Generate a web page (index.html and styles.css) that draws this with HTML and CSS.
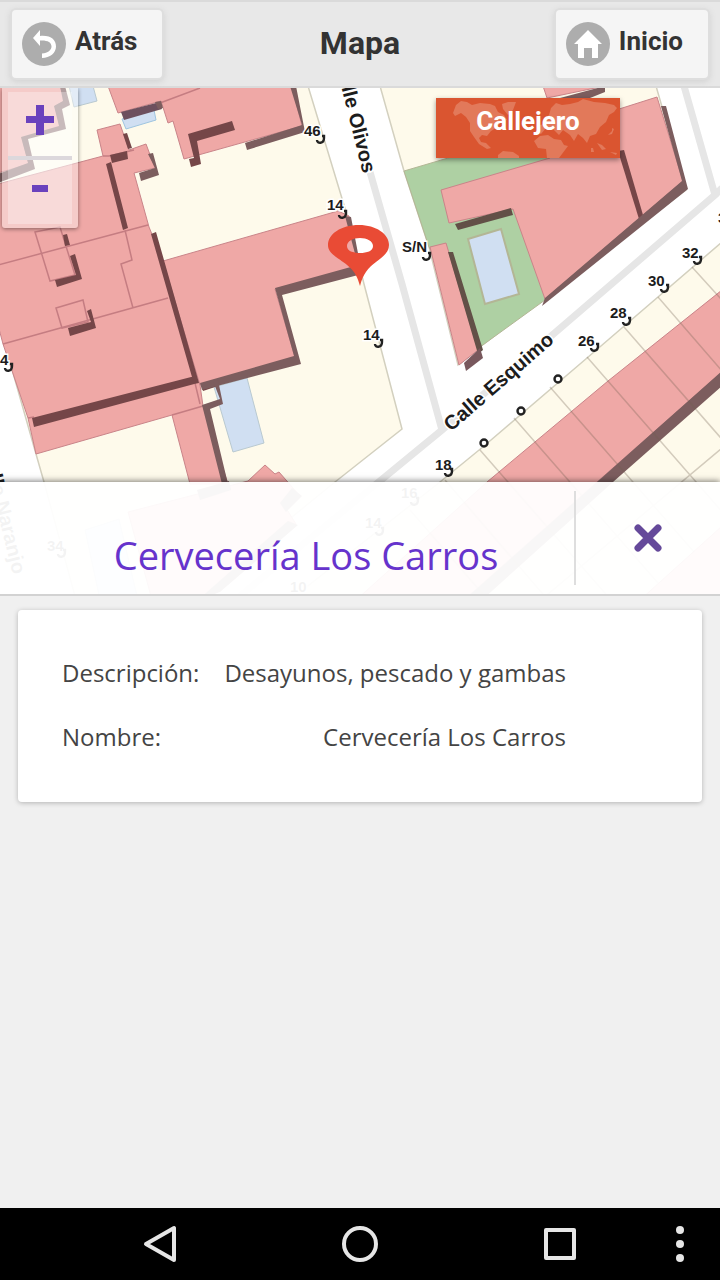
FILE: index.html
```html
<!DOCTYPE html>
<html lang="es">
<head>
<meta charset="utf-8">
<meta name="viewport" content="width=device-width, initial-scale=1">
<title>Mapa</title>
<link rel="stylesheet" href="styles.css">
</head>
<body>
<div class="app">
  <header class="topbar">
    <button class="nav-btn" type="button">
      <svg class="nav-icon" viewBox="0 0 44 44" aria-hidden="true"><circle cx="22" cy="22" r="22" fill="#adadad"/><path d="M18 8v6C29 13 34 18 34 24.500C34 31 28 36 20 36v-4.500C26 31 29.500 28 29.500 24.500C29.500 20 25 18 18 18.500V24L11 16z" fill="#fff"/></svg>
      <span>Atrás</span>
    </button>
    <h1 class="topbar-title">Mapa</h1>
    <button class="nav-btn" type="button">
      <svg class="nav-icon" viewBox="0 0 44 44" aria-hidden="true"><circle cx="22" cy="22" r="22" fill="#adadad"/><path d="M22 8L36 22H32V36H26V26H18V36H12V22H8z" fill="#fff"/></svg>
      <span>Inicio</span>
    </button>
  </header>

  <section class="map">
    <svg class="map-canvas" viewBox="0 88 720 508" preserveAspectRatio="xMidYMid slice" role="img" aria-label="Callejero">
      <rect y="88" width="720" height="508" fill="#fefaeb"/>
      <!-- streets -->
      <g fill="#fff" stroke="#d3d0bf" stroke-width="1.500">
        <path d="M308 86L347 215L364 284L402 429L335 482L190 600H290L440 482L484 446L587 358L722 242V86H656L686 190L541 300L480 347L458 365L429 247L404 171L380 86z"/>
        <path d="M-2 320L36 454L44 482L76 600H-2z"/>
      </g>
      <path d="M370 172L402 284L442 430M240 596L442 430L715 195L684 86M715 195L722 188" fill="none" stroke="#e6e6e6" stroke-width="7"/>
      <path d="M404 171L560 125V200L545 300L480 347L429 247z" fill="#aed0a3" stroke="#b3b695"/>
      <g fill="#d0dff2" stroke="#b9c9d0">
        <path d="M468 239L501 229L519 294L485 304z" stroke="#b3b695" stroke-width="2"/>
        <path d="M214 387L247 378L264 443L233 452z"/>
        <path d="M69 86H93L97 101L74 107z"/>
        <path d="M122 119L154 110L156 120L126 129z" stroke="#9fc5e0"/>
        <path d="M85 530L119 519L138 600H100z"/>
      </g>
      <!-- buildings -->
      <g fill="#efa8a6" stroke="#c98489" stroke-width="1">
        <path d="M-2 86H60L65 101L55 106L61 127L22 138L29 164L-2 173z"/>
        <path d="M108 86L118 113L161 101L168 123L173 121L184 159L302 126L292 86z"/>
        <path d="M-2 184L103 156L97 130L120 124L129 150L146 144L155 168L134 173L149 227L163 261L200 385L203 406L228 484H190L172 415L36 454L28 418L3 344L-2 325z"/>
        <path d="M163 261L338 211L349 216L360 268L275 289L295 357L200 385z"/>
        <path d="M441 190L550 158L556 129L657 97L683 181L545 299L513 209L449 223z"/>
        <path d="M543 86L547 98L605 86z"/>
        <path d="M430 247L446 243L478 350L459 365z"/>
        <path d="M356 600L487 482L608 381L722 290V372L597 482L464 600z"/>
        <path d="M128 512L248 481L265 465L275 474L279 472L300 496L286 508L296 524L207 600H152z"/>
        <path d="M640 600L722 526V600z"/>
      </g>
      <g fill="none" stroke="#c57d82" stroke-width="1.500">
        <path d="M-2 265L148 225M3 344L168 298M125 230L132 260L121 264L133 308M28 418L34 417M195 383L200 404M172 415L203 406M103 156L109 156L134 150M160 103L200 88"/>
        <path d="M35 232L60 227L75 275L50 281zM56 308L83 300L88 322L62 328z"/>
      </g>
      <!-- building shadows -->
      <g fill="#754648">
        <path d="M106 164L111 162L128 228L123 230zM151 234L156 232L199 383L194 384zM32 418L195 376L198 383L34 427zM110 155L127 151L128 159L112 163z"/>
        <path d="M63 235L67 234L70 245L65 246zM70 256L75 254L82 279L57 287L55 280L76 275zM87 311L91 309L96 328L70 336L68 328L91 322z"/>
        <path d="M123 134L127 133L132 148L128 149zM201 384L216 380L218 386L203 391z"/>
        <path d="M188 134L232 121L235 130L197 141L201 164L191 167L189 159L194 158z"/>
        <path d="M618 151L624 150L643 215L639 219z"/>
      </g>
      <g fill="#7c5d5e">
        <path d="M121 112L160 102L162 109L124 120z" fill="#6d505e"/>
        <path d="M60 86H65L70 105L62 109L66 129L28 139L35 169L-2 183V174L28 163L21 137L59 126L54 106L63 101z"/>
        <path d="M148 154L153 153L159 175L141 181L139 173L155 168zM155 102L161 101L163 108L158 109z"/>
        <path d="M290 86H296L305 132L247 150L245 143L302 125z"/>
        <path d="M345 216L351 217L362 274L282 295L301 364L202 390L200 383L294 356L275 288L358 265z"/>
        <path d="M213 381L218 380L223 404L210 409L228 484H222L202 405L220 399z"/>
        <path d="M661 106L666 106L688 189L542 306L545 298L682 181z"/>
        <path d="M560 98L605 86V92L590 98z"/>
        <path d="M722 371V386L613 482L482 600H464L597 482z"/>
        <path d="M197 490L229 481L231 490L200 500zM280 503L292 488L302 496L286 512zM198 600L288 521L298 525L220 592z"/>
      </g>
      <path d="M455 224L511 208L513 215L458 230zM448 252L453 252L483 350L478 354z" fill="#625047"/>
      <path d="M464 363L480 348L483 358L466 371z" fill="#78585d"/>
      <g stroke="#706050" stroke-opacity=".3" stroke-width="1.500">
        <path d="M692 267L722 300M658 297L722 371M624 327L768 492M587 357L731 522M550 387L694 552M514 418L658 583M480 450L611 600M445 480L548 600M410 510L488 600M722 448L541 600"/>
      </g>
      <!-- house numbers -->
      <g class="map-number">
        <text x="304" y="136">46</text><text x="327" y="210">14</text><text x="402" y="252">S/N</text><text x="363" y="340">14</text>
        <text x="682" y="258">32</text><text x="648" y="286">30</text><text x="610" y="318">28</text><text x="578" y="346">26</text>
        <text x="435" y="470">18</text><text x="401" y="498">16</text><text x="365" y="528">14</text><text x="290" y="592">10</text><text x="0" y="365">4</text><text x="47" y="551">34</text><text x="718" y="223">3</text>
      </g>
      <g fill="none" stroke="#222" stroke-width="2.400">
        <path id="mark" d="M317 140c0 4 7 4 7-2v-2h-2"/>
        <use href="#mark" x="22" y="75"/><use href="#mark" x="106" y="117"/><use href="#mark" x="58" y="204"/>
        <use href="#mark" x="377" y="121"/><use href="#mark" x="344" y="149"/><use href="#mark" x="306" y="182"/><use href="#mark" x="274" y="208"/>
        <use href="#mark" x="128" y="333"/><use href="#mark" x="94" y="362"/><use href="#mark" x="59" y="392"/><use href="#mark" x="-312" y="228"/><use href="#mark" x="-259" y="414"/>
        <circle cx="558" cy="379" r="3.500"/><circle cx="521" cy="411" r="3.500"/><circle cx="484" cy="443" r="3.500"/>
      </g>
      <g class="map-street">
        <text transform="translate(363 174) rotate(76)" text-anchor="end">Calle Olivos</text>
        <text transform="translate(451 432) rotate(-41)">Calle Esquimo</text>
        <text transform="translate(13 575) rotate(76)" text-anchor="end">Calle Naranjo</text>
      </g>
      <path d="M360 286C356 269 347 265 336 257C331 253 328 250 328 245C328 234 341 225 359 225C376 225 389 234 389 245C389 252 383 257 376 262C368 268 363 274 360 286zM360 238C353 238 347 241 347 246S353 253 360 253S373 251 373 246S367 238 360 238z" fill="#e94b35" fill-rule="evenodd"/>
    </svg>

    <div class="zoom">
      <button class="zoom-btn" type="button" aria-label="Acercar"><svg viewBox="0 0 28 30" width="28" height="30"><path d="M10 0h8v11h10v7H18v12h-8V18H0v-7h10z" fill="#6a42bd"/></svg></button>
      <button class="zoom-btn" type="button" aria-label="Alejar"><svg viewBox="0 0 28 30" width="28" height="30"><path d="M6 12h16v7H6z" fill="#6a42bd"/></svg></button>
    </div>

    <button class="layer-btn" type="button">
      <svg class="layer-world" viewBox="0 0 184 60" preserveAspectRatio="none" aria-hidden="true">
        <g fill="#e2795a">
          <path d="M20 7l5-4 6 1 5 3 8-2 10 1 5 2 3 6 6 3 3 5-6 2-5 6-5 3-4 5-5-1-3 3 2 4 5 1 5 5-4 1-8-5-5-7-4-6v-8l-4-6-5-4-6 3-2-3z"/>
          <path d="M62 57l5-4 10 1 6 4v2H62zM66 6l6-2h8l-3 8-5 5-5-6z"/>
          <path d="M98 43l6-5 8-1 6 4 7 1 3 5 4 1-6 8-3 4h-12l-1-9-8-1z"/>
          <path d="M101 34l1-6 5-2 3-6 3-3 2-7 5-5 6 2 8-1 8-2 5-3 11 3 11 1 9 2 3 3-3 4-5 3-3 7-6 5-4 7-6 2-3 7-4-5-5-4-4 7-4-6-7-5-4 5-6-6-7-1-5 6z"/>
          <path d="M161 45l5 2 4 4-4 1zM172 37l4-4v-3l2 1-2 5zM174 54l7 1-1 2zM155 50h2l1 4h-3z"/>
        </g>
      </svg>
      <span class="layer-label">Callejero</span>
    </button>

    <div class="place">
      <h2 class="place-name">Cervecería Los Carros</h2>
      <button class="place-close" type="button" aria-label="Cerrar"><svg viewBox="0 0 28 28" width="28" height="28"><path d="M4 4L24 24M24 4L4 24" stroke="#65499a" stroke-width="7" stroke-linecap="round"/></svg></button>
    </div>
  </section>

  <main class="content">
    <dl class="card">
      <dt>Descripción:</dt><dd>Desayunos, pescado y gambas</dd>
      <dt>Nombre:</dt><dd>Cervecería Los Carros</dd>
    </dl>
  </main>

  <nav class="system" aria-label="Sistema">
    <button class="system-btn" type="button" aria-label="Atrás"><svg viewBox="0 0 40 40" width="40" height="40"><path d="M34 4V36L6 20z"/></svg></button>
    <button class="system-btn" type="button" aria-label="Inicio"><svg viewBox="0 0 40 40" width="40" height="40"><circle cx="20" cy="20" r="16"/></svg></button>
    <button class="system-btn" type="button" aria-label="Recientes"><svg viewBox="0 0 40 40" width="40" height="40"><rect x="6" y="6" width="28" height="28"/></svg></button>
    <button class="system-more" type="button" aria-label="Más opciones"><svg viewBox="0 0 8 40" width="8" height="40"><g fill="#e6e6e6" stroke="none"><circle cx="4" cy="6" r="4"/><circle cx="4" cy="20" r="4"/><circle cx="4" cy="34" r="4"/></g></svg></button>
  </nav>
</div>
</body>
</html>
```

FILE: styles.css
```css
* {
  box-sizing: border-box;
}

body {
  margin: 0;
  background: #f0f0f0;
  color: #333;
  font-family: "Open Sans", "Noto Sans", sans-serif;
}

button {
  margin: 0;
  padding: 0;
  border: 0;
  background: none;
  color: inherit;
  cursor: pointer;
}

svg {
  display: block;
}

.app {
  display: flex;
  flex-direction: column;
  min-height: 100vh;
}

.topbar {
  display: grid;
  grid-template-columns: 1fr auto 1fr;
  padding: 8px 12px;
  border-top: 2px solid #dadada;
  border-bottom: 2px solid #dadada;
  background: #e8e8e8;
  font-family: Roboto, sans-serif;
}

.topbar-title {
  align-self: center;
  margin: 0;
  padding-bottom: 2px;
  font-size: 32px;
  line-height: 36px;
}

.nav-btn {
  display: flex;
  align-items: center;
  gap: 9px;
  justify-self: start;
  height: 68px;
  padding: 0 25px 0 10px;
  border-radius: 4px;
  background: #f5f5f5;
  box-shadow: 0 0 0 2px #dedede, 0 2px 6px 2px #d2d2d2;
  font: bold 26px/30px Roboto, sans-serif;
}

.nav-btn:last-child {
  justify-self: end;
}

.nav-btn span {
  padding-bottom: 6px;
}

.nav-icon {
  width: 44px;
  height: 44px;
}

.map {
  position: relative;
  overflow: hidden;
  height: 508px;
}

.map-canvas {
  width: 100%;
  height: 100%;
}

.map-number,
.map-street {
  fill: #1c1c1c;
  stroke: #fff;
  stroke-width: 3px;
  paint-order: stroke;
  font-family: "Liberation Sans", Arial, sans-serif;
}

.map-number {
  font-size: 15px;
  font-weight: bold;
}

.map-street {
  font-size: 20px;
  font-weight: bold;
}

.zoom {
  position: absolute;
  top: 0;
  left: 2px;
  width: 76px;
  padding: 4px 6px;
  border-radius: 0 0 3px 3px;
  background: rgba(255, 255, 255, .4);
  box-shadow: 0 1px 4px rgba(0, 0, 0, .45);
}

.zoom-btn {
  display: flex;
  align-items: center;
  justify-content: center;
  width: 100%;
  height: 64px;
  padding-bottom: 8px;
  background: rgba(255, 255, 255, .3);
}

.zoom-btn:first-child {
  height: 68px;
  border-bottom: 4px solid #dcd8dc;
}

.layer-btn {
  position: absolute;
  top: 10px;
  right: 100px;
  width: 184px;
  height: 60px;
  background: #da5530;
  box-shadow: 0 2px 5px rgba(0, 0, 0, .4);
  color: #fff;
  font: bold 26px/46px Roboto, sans-serif;
}

.layer-world {
  position: absolute;
  inset: 0;
  width: 100%;
  height: 100%;
}

.layer-label {
  position: relative;
  display: block;
  height: 60px;
}

.place {
  position: absolute;
  right: 0;
  bottom: 0;
  left: 0;
  display: flex;
  align-items: center;
  height: 114px;
  border-bottom: 2px solid #d2d2d2;
  background: rgba(255, 255, 255, .95);
  box-shadow: 0 -1px 6px rgba(0, 0, 0, .5);
}

.place-name {
  flex: 1;
  margin: 0;
  padding: 34px 0 0 38px;
  color: #6633cc;
  font-size: 38px;
  font-weight: 400;
  line-height: 44px;
  text-align: center;
}

.place-close {
  display: flex;
  align-items: center;
  justify-content: center;
  width: 146px;
  height: 94px;
  border-left: 2px solid #dedede;
}

.content {
  flex: 1;
  padding: 14px 18px;
}

.card {
  display: grid;
  grid-template-columns: max-content max-content;
  column-gap: 25px;
  margin: 0;
  padding: 31px 44px 33px;
  border-radius: 4px;
  background: #fff;
  box-shadow: 0 1px 5px rgba(0, 0, 0, .25);
  color: #444;
  font-size: 24px;
  line-height: 64px;
}

.card dd {
  margin: 0;
  text-align: right;
}

.system {
  position: relative;
  display: flex;
  justify-content: center;
  gap: 160px;
  padding: 16px 0;
  background: #000;
}

.system svg {
  fill: none;
  stroke: #e6e6e6;
  stroke-width: 4;
  stroke-linejoin: round;
}

.system-more {
  position: absolute;
  top: 16px;
  right: 36px;
}
```
